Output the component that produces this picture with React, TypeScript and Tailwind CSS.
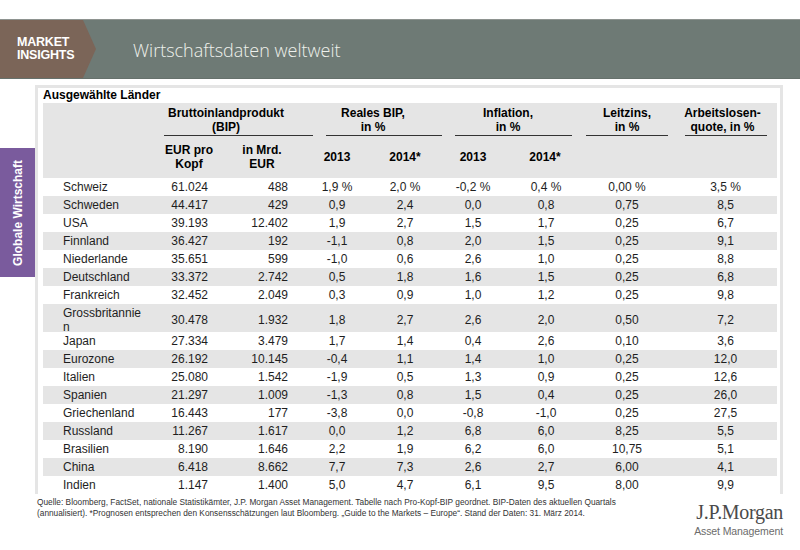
const cols = "grid grid-cols-[117px_58px_92px_54px_82px_54px_92px_76px_109px]";

const rows: string[][] = [
  ["Schweiz", "61.024", "488", "1,9 %", "2,0 %", "-0,2 %", "0,4 %", "0,00 %", "3,5 %"],
  ["Schweden", "44.417", "429", "0,9", "2,4", "0,0", "0,8", "0,75", "8,5"],
  ["USA", "39.193", "12.402", "1,9", "2,7", "1,5", "1,7", "0,25", "6,7"],
  ["Finnland", "36.427", "192", "-1,1", "0,8", "2,0", "1,5", "0,25", "9,1"],
  ["Niederlande", "35.651", "599", "-1,0", "0,6", "2,6", "1,0", "0,25", "8,8"],
  ["Deutschland", "33.372", "2.742", "0,5", "1,8", "1,6", "1,5", "0,25", "6,8"],
  ["Frankreich", "32.452", "2.049", "0,3", "0,9", "1,0", "1,2", "0,25", "9,8"],
  ["Grossbritannien", "30.478", "1.932", "1,8", "2,7", "2,6", "2,0", "0,50", "7,2"],
  ["Japan", "27.334", "3.479", "1,7", "1,4", "0,4", "2,6", "0,10", "3,6"],
  ["Eurozone", "26.192", "10.145", "-0,4", "1,1", "1,4", "1,0", "0,25", "12,0"],
  ["Italien", "25.080", "1.542", "-1,9", "0,5", "1,3", "0,9", "0,25", "12,6"],
  ["Spanien", "21.297", "1.009", "-1,3", "0,8", "1,5", "0,4", "0,25", "26,0"],
  ["Griechenland", "16.443", "177", "-3,8", "0,0", "-0,8", "-1,0", "0,25", "27,5"],
  ["Russland", "11.267", "1.617", "0,0", "1,2", "6,8", "6,0", "8,25", "5,5"],
  ["Brasilien", "8.190", "1.646", "2,2", "1,9", "6,2", "6,0", "10,75", "5,1"],
  ["China", "6.418", "8.662", "7,7", "7,3", "2,6", "2,7", "6,00", "4,1"],
  ["Indien", "1.147", "1.400", "5,0", "4,7", "6,1", "9,5", "8,00", "9,9"],
];

function GroupHead({ span, text, line, textClass }: { span: string; text: string[]; line: string; textClass: string }) {
  return (
    <div className={`${span} flex flex-col h-[33px] pt-[3px]`}>
      <div className={`text-center leading-[14px] font-bold ${textClass}`}>
        {text.map((t) => (
          <div key={t}>{t}</div>
        ))}
      </div>
      <div className={`mt-auto border-b border-[#333] ${line}`} />
    </div>
  );
}

export default function App() {
  return (
    <div className="w-[800px] h-[550px] bg-white pt-[19px] font-['Liberation_Sans',Arial,sans-serif] text-[#1e1e1e] overflow-hidden">
      {/* title bar */}
      <div className="flex h-[60px] bg-[#6e7a75] border-t border-[#8e9390] border-b border-b-[#66716c]">
        <div className="w-[96px] h-full bg-[#7b6558] [clip-path:polygon(0_0,83px_0,96px_50%,83px_100%,0_100%)] flex flex-col justify-center pl-[17px] text-white font-bold text-[12.5px] leading-[13px] tracking-[-0.2px]">
          <div>MARKET</div>
          <div>INSIGHTS</div>
        </div>
        <div className="ml-[37px] flex items-center pt-[3px] font-['Open_Sans',sans-serif] font-light text-[18px] text-[#eef1ec]">
          Wirtschaftsdaten weltweit
        </div>
      </div>

      <div className="flex mt-[6px]">
        <div className="w-[35px] pt-[63px]">
          <div className="h-[129px] bg-[#7a5b9d] flex items-center justify-center">
            <span className="[writing-mode:vertical-rl] rotate-180 text-white font-bold text-[12px] leading-[14px]">
              Globale Wirtschaft
            </span>
          </div>
        </div>

        <div className="w-[748px]">
          <div className="border-[3px] border-b-0 border-[#e5e5e5] pl-[5px] pr-[3px] text-[12px]">
            <div className="font-bold text-[12px] leading-[15px] text-black">Ausgewählte Länder</div>

            <div className="bg-[#e5e5e5] text-black">
              <div className={cols}>
                <div />
                <GroupHead span="col-span-2" text={["Bruttoinlandprodukt", "(BIP)"]} line="ml-[4px] mr-[-3px]" textClass="pr-[18px]" />
                <GroupHead span="col-span-2" text={["Reales BIP,", "in %"]} line="ml-[16px] mr-[4px]" textClass="pr-[10px]" />
                <GroupHead span="col-span-2" text={["Inflation,", "in %"]} line="ml-[9px] mr-[20px]" textClass="pr-[22px]" />
                <GroupHead span="" text={["Leitzins,", "in %"]} line="ml-[-6px]" textClass="pr-[6px]" />
                <GroupHead span="" text={["Arbeitslosen-", "quote, in %"]} line="ml-[17px] mr-[10px]" textClass="" />
              </div>
              <div className={`${cols} h-[42px] items-center font-bold leading-[14px] text-center`}>
                <div />
                <div>EUR pro<br />Kopf</div>
                <div className="pr-[4px]">in Mrd.<br />EUR</div>
                <div>2013</div>
                <div>2014*</div>
                <div>2013</div>
                <div className="pr-[2px]">2014*</div>
                <div />
                <div />
              </div>
            </div>

            {rows.map((r, i) => (
              <div
                key={r[0]}
                className={`${cols} items-center ${i % 2 === 1 ? "bg-[#e5e5e5]" : "bg-white"} ${
                  r[0] === "Grossbritannien" ? "h-[28px] leading-[14px] pt-[2px]" : "h-[18px] leading-[14px]"
                }`}
              >
                <div className="pl-[20px] pr-[15px] break-all">{r[0]}</div>
                <div className="text-right pr-[10px]">{r[1]}</div>
                <div className="text-right pr-[22px]">{r[2]}</div>
                <div className="text-center">{r[3]}</div>
                <div className="text-center">{r[4]}</div>
                <div className="text-center">{r[5]}</div>
                <div className="text-center">{r[6]}</div>
                <div className="text-center pr-[6px]">{r[7]}</div>
                <div className="text-center pl-[6px]">{r[8]}</div>
              </div>
            ))}
          </div>

          <div className="flex justify-between mt-[3px]">
            <p className="pl-[2px] text-[8.3px] leading-[11px] text-[#333]">
              Quelle: Bloomberg, FactSet, nationale Statistikämter, J.P. Morgan Asset Management. Tabelle nach Pro-Kopf-BIP geordnet. BIP-Daten des aktuellen Quartals
              <br />
              (annualisiert). *Prognosen entsprechen den Konsensschätzungen laut Bloomberg. „Guide to the Markets – Europe“. Stand der Daten: 31. März 2014.
            </p>
            <div className="flex flex-col items-end mt-[5px]">
              <div className="font-['Liberation_Serif',serif] text-[20px] leading-[20px] text-[#4a4a4a] tracking-[-0.3px]">J.P.Morgan</div>
              <div className="mt-[3px] text-[10.5px] leading-[12px] text-[#6b6b6b] tracking-[-0.1px]">Asset Management</div>
            </div>
          </div>
        </div>
      </div>
    </div>
  );
}
